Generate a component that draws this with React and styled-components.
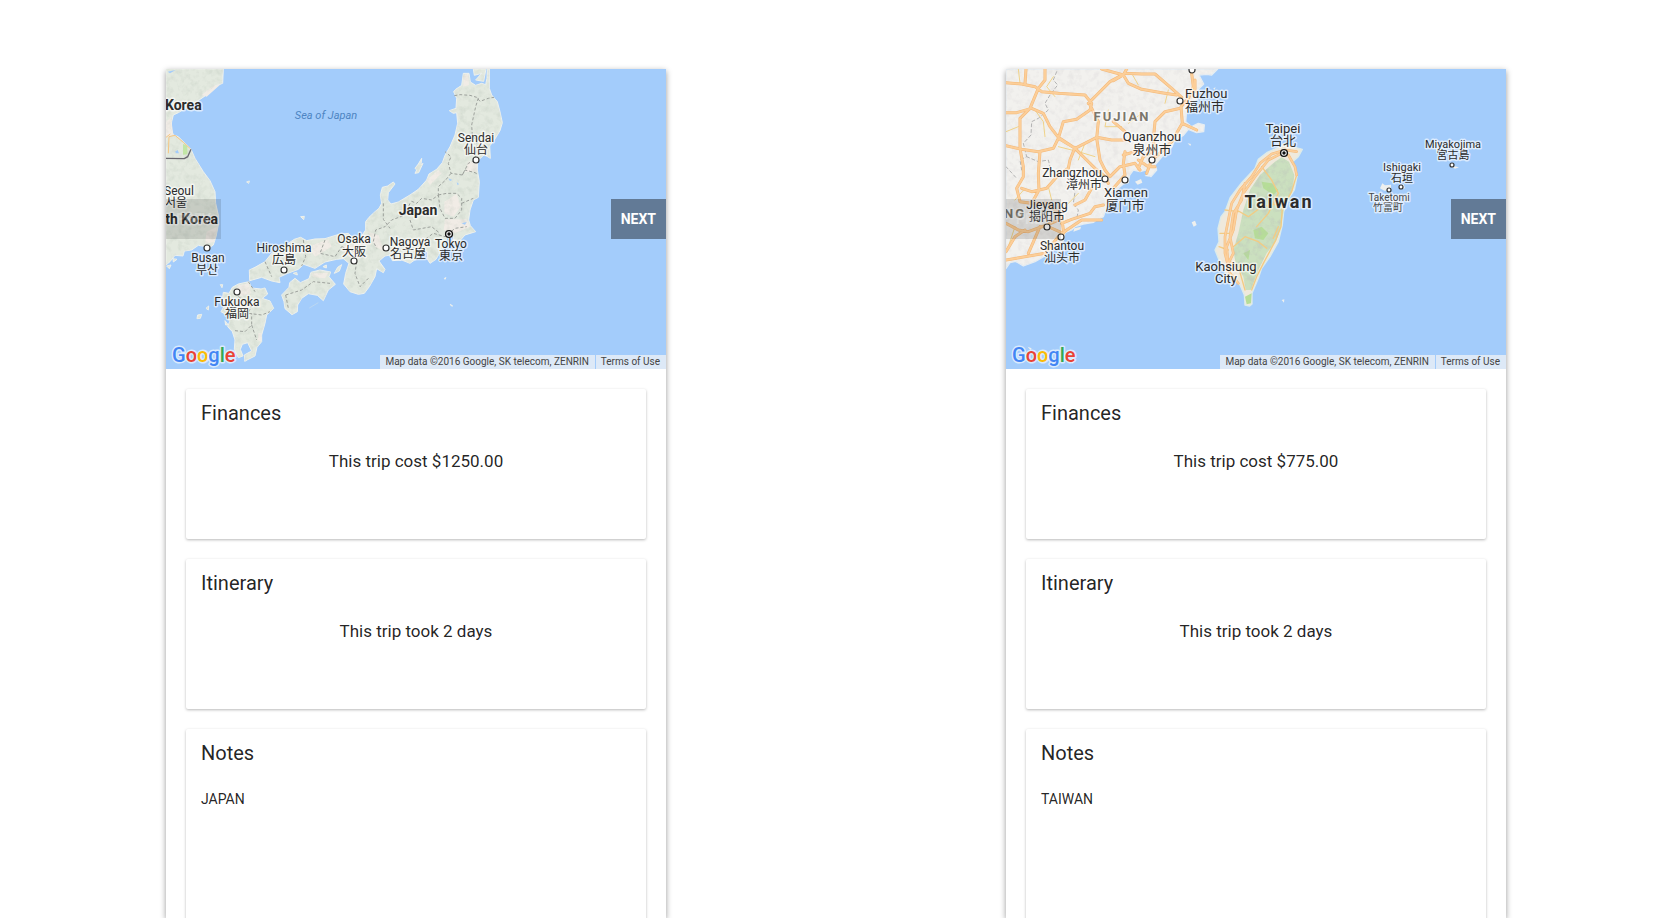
import React from "react";
import styled, { createGlobalStyle } from "styled-components";

const GlobalStyle = createGlobalStyle`
  * { box-sizing: border-box; }
  body {
    margin: 0;
    background: #fff;
    color: rgba(0, 0, 0, 0.87);
    font-family: Roboto, "Noto Sans CJK JP", sans-serif;
  }
`;

const Page = styled.main`
  display: grid;
  grid-template-columns: 1fr 1fr;
  column-gap: 12px;
  padding: 69px 0 0 2px;
  height: 100vh;
  overflow: hidden;
`;

const TripCard = styled.article`
  width: 100%;
  max-width: 500px;
  min-height: 100%;
  justify-self: center;
  background: #fff;
  box-shadow: 0 2px 6px rgba(0, 0, 0, 0.4);
`;

const MapFrame = styled.div`
  position: relative;
  height: 300px;
  overflow: hidden;
  background: #a3ccfb;
`;

const MapSvg = styled.svg`
  display: block;
  width: 500px;
  height: 300px;
`;

const MapLabel = styled.text`
  font-family: Roboto, "Noto Sans CJK JP", "Noto Sans CJK KR", sans-serif;
  font-size: ${(p) => p.$size || 12}px;
  font-weight: ${(p) => (p.$bold ? 700 : 400)};
  font-style: ${(p) => (p.$italic ? "italic" : "normal")};
  letter-spacing: ${(p) => (p.$wide ? "2px" : "normal")};
  text-anchor: ${(p) => p.$anchor || "middle"};
  fill: ${(p) => p.$color || "#2c2c2c"};
  stroke: ${(p) => (p.$italic ? "none" : "rgba(255, 255, 255, 0.6)")};
  stroke-width: 3px;
  stroke-linejoin: round;
  paint-order: stroke;
`;

const LogoText = styled.text`
  font-family: Roboto, sans-serif;
  font-size: 20px;
  font-weight: 500;
  stroke: rgba(255, 255, 255, 0.6);
  stroke-width: 3px;
  stroke-linejoin: round;
  paint-order: stroke;
`;

const NavButton = styled.button`
  position: absolute;
  top: 130px;
  ${(p) => p.$side}: 0;
  height: 40px;
  padding: 0 10px;
  border: 0;
  background: rgba(0, 0, 0, 0.4);
  color: #fff;
  font: 700 14px/40px Roboto, sans-serif;
  text-transform: uppercase;
  cursor: pointer;
  &:disabled {
    background: rgba(0, 0, 0, 0.12);
    color: rgba(255, 255, 255, 0.25);
    cursor: default;
  }
`;

const Attribution = styled.div`
  position: absolute;
  right: 0;
  bottom: 0;
  display: flex;
  gap: 1px;
  font-size: 10px;
  line-height: 14px;
  color: #444;
`;

const Credit = styled.span`
  padding: 0 6px 0 5px;
  background: rgba(245, 245, 245, 0.7);
`;

const TermsLink = styled.a`
  padding: 0 6px 0 5px;
  background: rgba(245, 245, 245, 0.7);
  color: inherit;
  text-decoration: none;
`;

const Panels = styled.div`
  display: flex;
  flex-direction: column;
  gap: 20px;
  padding: 20px;
`;

const Panel = styled.section`
  min-height: ${(p) => (p.$tall ? 300 : 150)}px;
  padding: 12px 15px 16px;
  border-radius: 2px;
  background: #fff;
  box-shadow: 0 1px 3px rgba(0, 0, 0, 0.28);
`;

const PanelTitle = styled.h2`
  margin: 0;
  font-size: 20px;
  line-height: 24px;
  font-weight: 400;
`;

const Summary = styled.p`
  margin: 24px 0 0;
  font-size: 17px;
  line-height: 24px;
  text-align: center;
`;

const Note = styled.p`
  margin: 24px 0 0;
  font-size: 14px;
  line-height: 20px;
`;

const JAPAN_LAND = [
  "M33,27H205L203,70 180,78 160,95 150,108 125,125 70,158 55,165 50,185 48,205 55,225 70,230 90,250 108,268 120,295 145,335 165,362 180,395 182,430 190,465 190,495 183,530 175,555 165,562 130,556 110,570 88,573 84,588 60,586 45,605 33,615Z",
  "M283,630 300,622 330,605 350,580 378,565 400,550 418,538 437,532 455,542 480,537 510,536 545,525 580,520 592,532 620,528 632,510 632,485 642,472 660,455 672,445 680,430 676,405 682,382 698,378 715,366 720,372 700,398 698,420 708,432 730,426 765,405 790,388 815,360 822,342 845,328 862,308 870,286 885,260 900,225 908,190 905,158 895,160 883,152 903,145 905,115 896,95 902,88 920,76 925,40 942,40 946,66 962,76 980,70 992,74 996,55 997,27 1003,27 1003,85 1010,105 1027,125 1035,155 1042,188 1035,212 1018,240 1004,258 1006,295 988,284 968,302 967,330 973,365 970,412 955,420 945,450 941,480 946,497 962,515 930,525 915,542 903,556 892,550 896,528 878,530 866,558 843,598 825,610 817,597 817,575 800,572 790,592 765,610 740,600 712,602 706,585 690,588 672,603 690,628 685,638 665,626 660,650 643,680 628,700 610,703 585,695 566,672 572,640 582,610 565,596 545,598 510,606 480,625 446,613 430,628 398,640 372,652 375,668 350,663 320,652 284,662Z",
  "M380,705 402,682 404,668 420,655 436,668 462,656 468,637 495,630 527,636 522,650 541,673 520,690 505,722 487,706 460,701 440,715 428,735 427,755 411,764 390,746 387,725Z",
  "M538,640 548,622 560,614 553,633Z",
  "M203,712 205,697 222,700 232,682 250,672 282,665 290,684 318,687 330,684 338,702 322,715 345,723 356,745 335,765 330,790 320,825 320,845 306,862 300,888 270,903 268,885 290,873 278,848 262,853 256,868 264,888 250,893 238,868 240,840 232,815 218,800 224,785 215,765 198,755 210,735Z",
  "M780,325 790,312 800,295 798,315 804,310 791,338 780,340 785,330Z",
  "M955,27H993L986,64 962,60 980,40 958,46Z",
  "M128,765 140,763 136,775 126,776Z M153,745 161,738 160,750Z M196,674 203,674 201,683Z M275,366 283,363 281,370Z M437,470 448,469 446,479Z M868,655 873,653 870,658Z M886,733 893,738 889,738Z M35,618 48,615 43,626Z M54,596 66,598 55,606Z M415,640 425,637 427,645Z M504,620 514,615 514,624Z M210,782 220,795 212,795Z M268,903 275,898 274,902Z",
];

const JAPAN_BORDERS = [
  "M898,107 915,104 945,106 965,112 975,124 1000,115 1017,112",
  "M970,114 962,140 950,195 952,225 966,245 960,300 940,310 922,345 888,340 880,310 888,290 870,275",
  "M922,345 930,330 960,338 970,344 M888,340 872,360 850,380 850,405 830,420 800,415 785,430 765,422",
  "M850,405 875,400 905,400 920,415 920,450 900,475 870,475 855,445 850,405 M920,430 955,415",
  "M765,430 750,465 710,480 690,500 662,510 655,545 665,565 M685,430 685,478 705,505",
  "M445,540 452,590 440,618 M510,540 495,580 540,590 560,560 M330,605 350,650 M560,560 600,575 630,565",
  "M605,605 600,640 615,680 640,655 M392,705 440,690 475,665 525,670 M392,705 400,745",
  "M250,710 290,735 280,760 320,765 345,755 M240,812 270,815 290,795 290,760 M290,795 305,840 M280,665 300,695",
  "M765,480 775,510 830,500 855,520 M800,545 835,520 870,530 900,505 935,500",
];

const CHINA_LAND =
  "M33,27H668L650,45 635,43 612,45 626,72 608,90 606,118 590,125 600,145 575,152 572,185 590,200 610,190 628,195 626,215 605,218 580,208 565,226 540,240 530,262 508,282 490,303 480,315 485,330 468,350 457,342 460,328 435,335 415,330 404,345 400,368 385,372 370,385 350,396 360,420 335,440 325,470 308,478 296,487 265,492 240,500 230,510 210,518 204,545 190,560 165,570 150,588 120,605 85,618 62,604 45,608 33,625Z";

const CHINA_ISLANDS =
  "M420,365 438,357 442,368 428,374Z M448,348 462,340 464,350Z M578,250 588,252 586,258Z M655,85 662,82 658,90Z M1155,385 1162,370 1170,376 1188,374 1188,390 1168,392Z M1213,378 1226,372 1230,385 1218,388Z M1365,310 1375,318 1392,322 1380,326 1368,320Z M590,487 600,482 605,495 596,500Z M860,720 868,718 867,728Z M238,505 258,500 256,508 235,515Z M232,893 240,898 232,912Z M98,860 110,865 106,870Z";

const CHINA_ROADS = [
  "M33,68 80,72 120,80 140,95 190,100 270,105 290,130 285,150 245,178 205,185 190,235 175,265 130,275 80,268 33,257",
  "M150,27 150,60 130,85 105,145 75,175 75,265 85,320 85,350 65,385 75,425 110,430 160,430 200,470 205,510",
  "M33,158 65,158 110,145 145,160 165,200 190,232 240,265 275,300 300,325 330,350 340,370",
  "M93,27 90,72 M280,130 305,105 345,65 390,40 440,42 480,42 530,85 560,112 M320,27 385,45 400,70 440,88 500,98 545,105",
  "M395,27 385,45 355,62 M285,135 310,185 305,235 315,300 330,330 345,350 375,320 420,310 435,330",
  "M190,235 240,265 305,232 350,240 390,240 M240,262 225,300 220,325 190,345 155,385 110,395 80,385",
  "M135,275 130,340 132,390 110,430 M355,185 390,215 M556,145 510,155 480,185 475,240 480,270 445,290 430,325",
  "M590,40 595,80 580,115 558,140 562,190 530,245 500,275 470,300 455,340 M562,190 605,210",
  "M385,285 420,275 M390,275 385,310 390,345 355,385 M600,60 600,95 M430,300 460,320 480,320",
  "M290,385 270,420 240,435 M325,435 300,440 285,460 230,478 200,490 M320,480 260,480 215,510 190,530 150,580 33,600",
  "M33,490 70,510 100,515 155,495 190,480 M135,500 100,580 M33,575 60,530 90,510 M155,498 205,520",
];

const CHINA_LANES = [
  "M70,27 75,70 M175,50 155,80 180,110 M33,215 70,200 M120,150 145,185 150,230 M190,260 250,275 300,290 M270,250 250,300",
  "M340,150 330,200 380,200 M410,40 430,75 M440,160 400,190 M520,90 510,130 M90,385 60,420 M160,380 170,420 M250,400 210,440 M60,500 40,560",
];

const TAIWAN_LAND =
  "M780,325 790,298 815,278 850,262 870,252 900,262 922,268 910,290 893,305 898,325 907,345 898,390 882,415 866,455 862,495 850,545 825,590 800,625 790,655 771,700 771,732 764,738 750,735 748,705 735,675 715,655 692,640 672,600 660,570 672,545 669,505 678,470 690,455 706,412 740,368Z";

const TAIWAN_FOREST =
  "M840,305 860,292 882,305 898,345 893,390 868,440 858,500 845,540 815,580 790,630 768,690 752,690 745,650 722,610 715,570 730,520 745,450 765,390 795,345Z";

const TAIWAN_ROADS = [
  "M905,275 870,270 830,282 795,310 770,350 735,390 710,430 700,480 690,530 690,580 705,640 730,670",
  "M860,280 820,300 780,350 745,400 725,450 715,510 695,560 700,620",
  "M750,370 740,420 715,460 705,530 715,580 700,610 M880,285 900,320 905,345",
];

const TAIWAN_LANES = [
  "M905,345 890,395 862,445 858,500 840,545 805,610 785,650 770,690",
  "M725,450 760,470 800,440 860,430 M715,560 750,530 790,545 815,565 M700,600 730,620 750,690 M800,320 830,360 850,400 820,460 785,500 M690,450 730,455 M675,520 705,520 M672,560 700,570 M850,500 835,535",
];

const JAPAN_LABELS = [
  { x: -1, y: 41, text: "Korea", size: 14, bold: true, anchor: "start" },
  { x: 160, y: 50, text: "Sea of Japan", size: 11, italic: true, color: "#4d84c2" },
  { x: -2, y: 126, text: "Seoul", anchor: "start" },
  { x: -1, y: 138, text: "서울", anchor: "start" },
  { x: 52, y: 155, text: "th Korea", size: 14, bold: true, anchor: "end" },
  { x: 42, y: 193, text: "Busan" },
  { x: 41, y: 205, text: "부산" },
  { x: 118, y: 183, text: "Hiroshima" },
  { x: 118, y: 195, text: "広島" },
  { x: 188, y: 174, text: "Osaka" },
  { x: 188, y: 187, text: "大阪" },
  { x: 244, y: 177, text: "Nagoya" },
  { x: 242, y: 189, text: "名古屋" },
  { x: 285, y: 179, text: "Tokyo" },
  { x: 285, y: 191, text: "東京" },
  { x: 71, y: 237, text: "Fukuoka" },
  { x: 71, y: 249, text: "福岡" },
  { x: 310, y: 73, text: "Sendai" },
  { x: 310, y: 85, text: "仙台" },
  { x: 252, y: 146, text: "Japan", size: 14, bold: true },
];

const JAPAN_CITIES = [[41, 179], [118, 201], [188, 192], [220, 179], [71, 223], [310, 91]];

const TAIWAN_LABELS = [
  { x: 179, y: 29, text: "Fuzhou", size: 13, anchor: "start" },
  { x: 179, y: 42, text: "福州市", size: 13, anchor: "start" },
  { x: 116, y: 52, text: "FUJIAN", size: 13, bold: true, wide: true, color: "#7b766c" },
  { x: 146, y: 72, text: "Quanzhou", size: 13 },
  { x: 146, y: 85, text: "泉州市", size: 13 },
  { x: 66, y: 108, text: "Zhangzhou" },
  { x: 78, y: 120, text: "漳州市" },
  { x: 120, y: 128, text: "Xiamen", size: 13 },
  { x: 119, y: 141, text: "厦门市", size: 13 },
  { x: -2, y: 149, text: "NG", size: 13, bold: true, wide: true, color: "#7b766c", anchor: "start" },
  { x: 41, y: 140, text: "Jieyang" },
  { x: 41, y: 152, text: "揭阳市" },
  { x: 56, y: 181, text: "Shantou" },
  { x: 56, y: 193, text: "汕头市" },
  { x: 220, y: 202, text: "Kaohsiung", size: 13 },
  { x: 220, y: 214, text: "City", size: 13 },
  { x: 273, y: 139, text: "Taiwan", size: 18, bold: true, wide: true },
  { x: 277, y: 64, text: "Taipei", size: 13 },
  { x: 277, y: 76, text: "台北", size: 13 },
  { x: 447, y: 79, text: "Miyakojima", size: 11 },
  { x: 447, y: 90, text: "宮古島", size: 11 },
  { x: 396, y: 102, text: "Ishigaki", size: 11 },
  { x: 396, y: 113, text: "石垣", size: 11 },
  { x: 383, y: 132, text: "Taketomi", size: 10, color: "#484848" },
  { x: 382, y: 142, text: "竹富町", size: 10, color: "#484848" },
];

const TAIWAN_CITIES = [[174, 32], [186, 1], [146, 91], [99, 110], [119, 111], [41, 158], [55, 168], [446, 96], [395, 118], [383, 121]];

const toMap = "translate(-11 -9) scale(0.33333)";

function Relief({ id, d, strength, tint = "0.45" }) {
  return (
    <>
      <filter id={`${id}-noise`} x="0" y="0" width="100%" height="100%">
        <feTurbulence type="fractalNoise" baseFrequency="0.16" numOctaves="3" seed="7" />
        <feColorMatrix values={`0 0 0 0 ${tint} 0 0 0 0 0.52 0 0 0 0 ${tint} 2.6 1 0 0 -1.65`} />
      </filter>
      <clipPath id={`${id}-clip`}>
        <path d={d} transform={toMap} />
      </clipPath>
      <g clipPath={`url(#${id}-clip)`}>
        <rect width="500" height="300" filter={`url(#${id}-noise)`} opacity={strength} />
      </g>
    </>
  );
}

function Labels({ labels, cities, capital }) {
  // Local-script names go first so the halo never cuts the Latin name above.
  const ordered = [...labels].reverse();
  return (
    <>
      {ordered.map((l) => (
        <MapLabel key={l.text} x={l.x} y={l.y} $size={l.size} $bold={l.bold} $italic={l.italic} $wide={l.wide} $color={l.color} $anchor={l.anchor}>
          {l.text}
        </MapLabel>
      ))}
      {cities.map(([x, y]) => (
        <circle key={`${x}-${y}`} cx={x} cy={y} r={x > 350 ? 2 : 3} fill="#fff" stroke="#333" strokeWidth="1.2" />
      ))}
      <circle cx={capital[0]} cy={capital[1]} r="3.4" fill="#fff" stroke="#111" strokeWidth="1.4" />
      <circle cx={capital[0]} cy={capital[1]} r="1.7" fill="#111" />
      <LogoText x="6" y="293">
        <tspan fill="#4285f4">G</tspan>
        <tspan fill="#ea4335">o</tspan>
        <tspan fill="#fbbc05">o</tspan>
        <tspan fill="#4285f4">g</tspan>
        <tspan fill="#34a853">l</tspan>
        <tspan fill="#ea4335">e</tspan>
      </LogoText>
    </>
  );
}

function JapanMap() {
  const land = JAPAN_LAND.join(" ");
  return (
    <MapSvg viewBox="0 0 500 300" role="img" aria-label="Map of Japan">
      <g transform={toMap} strokeLinejoin="round">
        <path d={land} fill="#e3e9df" stroke="#eef1ee" strokeWidth="3" />
        <g fill="#f1ece6">
          <path d="M140,105 175,78 198,72 155,110Z M48,172 55,225 33,232 33,185Z M155,515 186,500 178,545 150,552Z" />
          <path d="M250,676 282,670 288,700 262,710 240,695Z M460,560 520,538 530,560 480,590Z M560,560 620,545 610,600 580,590Z" />
          <path d="M868,425 905,402 918,440 895,470 868,460Z M870,478 935,478 945,500 900,520 866,510Z M940,305 966,300 966,335 930,335Z M925,45 940,42 942,75 925,80Z M640,515 670,525 690,575 660,560Z M470,640 520,638 510,655 475,652Z M310,820 320,820 318,845 308,840Z M815,360 850,330 860,340 825,375Z" />
        </g>
      </g>
      <Relief id="japan" d={land} strength={0.25} />
      <g transform={toMap} fill="none">
        <path d={JAPAN_BORDERS.join(" ")} stroke="#9da19c" strokeWidth="3" strokeDasharray="9 6" />
        <path d="M33,295 88,296 98,290 108,268" stroke="#6a6870" strokeWidth="4" />
        <path d="M84,252 97,258 97,283 84,284Z" fill="#c2e6a6" />
        <path d="M40,280 42,230 60,226 85,247 106,266 M33,232 46,222" stroke="#f6c683" strokeWidth="3" />
        <path d="M60,275 68,270 72,280 64,280Z M880,355 892,360 885,363Z M905,366 912,372 908,376Z M38,35 62,30 45,40Z M920,490 935,486 930,494Z" fill="#a3ccfb" />
        <path d="M463,744 490,728" stroke="#c7ddec" strokeWidth="2" />
      </g>
      <Labels labels={JAPAN_LABELS} cities={JAPAN_CITIES} capital={[283, 165]} />
    </MapSvg>
  );
}

function TaiwanMap() {
  return (
    <MapSvg viewBox="0 0 500 300" role="img" aria-label="Map of Taiwan">
      <g transform={toMap} strokeLinejoin="round">
        <path d={CHINA_LAND} fill="#f2f1ee" stroke="#e6edf2" strokeWidth="4" />
        <path d={CHINA_ISLANDS} fill="#eff0ee" />
        <path d={TAIWAN_LAND} fill="#efe9dc" stroke="#dcebea" strokeWidth="4" />
        <path d={TAIWAN_FOREST} fill="#cbe0bf" />
        <path d="M800,365 830,370 850,390 835,405 805,385Z M775,510 800,500 820,520 805,540 780,535Z M750,710 770,700 768,730 755,733Z M745,580 765,570 760,600Z" fill="#b6dd98" />
      </g>
      <Relief id="china" d={CHINA_LAND} strength={0.18} tint="0.55" />
      <Relief id="taiwan" d={TAIWAN_FOREST} strength={0.45} tint="0.5" />
      <g transform={toMap} fill="none" strokeLinecap="round" strokeLinejoin="round">
        <path d="M185,35 175,60 188,75 165,105 150,130 160,150 130,175 110,185 108,225 85,250 95,290 75,300 80,330 M95,290 130,305 160,300 165,320 M33,320 65,355 M225,370 240,395 235,430 250,450 245,478" stroke="#b3b3b3" strokeWidth="3" strokeDasharray="9 8" />
        <path d={CHINA_LANES.join(" ")} stroke="#f0d389" strokeWidth="3" />
        <path d={CHINA_ROADS.join(" ")} stroke="#f3b878" strokeWidth="9" />
        <path d={CHINA_ROADS.join(" ")} stroke="#fcce98" strokeWidth="6" />
        <path d={TAIWAN_LANES.join(" ")} stroke="#f3cb83" strokeWidth="4" />
        <path d={TAIWAN_ROADS.join(" ")} stroke="#f4bb7c" strokeWidth="8" />
        <path d={TAIWAN_ROADS.join(" ")} stroke="#fccf9b" strokeWidth="5" />
      </g>
      <Labels labels={TAIWAN_LABELS} cities={TAIWAN_CITIES} capital={[278, 84]} />
    </MapSvg>
  );
}

function Trip({ map, cost, days, note }) {
  return (
    <TripCard>
      <MapFrame>
        {map}
        <NavButton type="button" $side="left" disabled>Prev</NavButton>
        <NavButton type="button" $side="right">Next</NavButton>
        <Attribution>
          <Credit>Map data ©2016 Google, SK telecom, ZENRIN</Credit>
          <TermsLink href="#terms">Terms of Use</TermsLink>
        </Attribution>
      </MapFrame>
      <Panels>
        <Panel>
          <PanelTitle>Finances</PanelTitle>
          <Summary>This trip cost ${cost}</Summary>
        </Panel>
        <Panel>
          <PanelTitle>Itinerary</PanelTitle>
          <Summary>This trip took {days} days</Summary>
        </Panel>
        <Panel $tall>
          <PanelTitle>Notes</PanelTitle>
          <Note>{note}</Note>
        </Panel>
      </Panels>
    </TripCard>
  );
}

export default function App() {
  return (
    <>
      <GlobalStyle />
      <Page>
        <Trip map={<JapanMap />} cost="1250.00" days={2} note="JAPAN" />
        <Trip map={<TaiwanMap />} cost="775.00" days={2} note="TAIWAN" />
      </Page>
    </>
  );
}
